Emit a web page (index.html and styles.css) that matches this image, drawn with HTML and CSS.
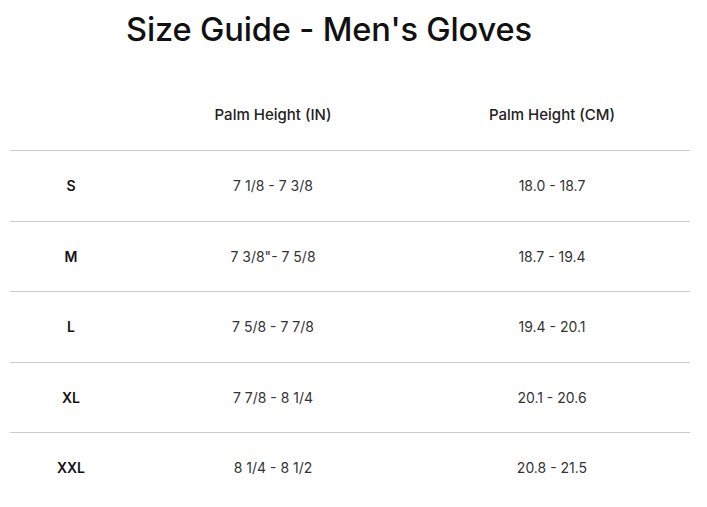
FILE: index.html
```html
<!DOCTYPE html>
<html>
<head>
<meta charset="utf-8">
<link rel="stylesheet" href="styles.css">
</head>
<body>
<div class="page">
  <h1 class="title">Size Guide - Men's Gloves</h1>
  <table class="sizes">
    <thead>
      <tr><th class="c1"></th><th class="c2">Palm Height (IN)</th><th class="c3">Palm Height (CM)</th></tr>
    </thead>
    <tbody>
      <tr><td class="size">S</td><td>7 1/8 - 7 3/8</td><td>18.0 - 18.7</td></tr>
      <tr><td class="size">M</td><td>7 3/8"- 7 5/8</td><td>18.7 - 19.4</td></tr>
      <tr><td class="size">L</td><td>7 5/8 - 7 7/8</td><td>19.4 - 20.1</td></tr>
      <tr><td class="size">XL</td><td>7 7/8 - 8 1/4</td><td>20.1 - 20.6</td></tr>
      <tr><td class="size">XXL</td><td>8 1/4 - 8 1/2</td><td>20.8 - 21.5</td></tr>
    </tbody>
  </table>
</div>
</body>
</html>
```
FILE: styles.css
```css
html, body { margin: 0; padding: 0; background: #fff; }
body { font-family: Inter, "Liberation Sans", sans-serif; color: #222; }
.page { padding: 0 17px 0 10px; }
.title {
  margin: 0;
  padding: 10px 0 0 116px;
  font-size: 32.6px;
  font-weight: 500;
  color: #111;
  line-height: 38px;
  letter-spacing: -0.15px;
}
.sizes {
  width: 680px;
  border-collapse: collapse;
  margin-top: 32px;
  table-layout: fixed;
}
.c1 { width: 122px; }
.c2 { width: 282px; }
.sizes th {
  font-weight: 500;
  font-size: 15px;
  height: 68px;
  padding: 0 0 2px;
  text-align: center;
  color: #222;
  border-bottom: 1px solid #ccc;
}
.sizes td {
  height: 69.5px;
  padding: 0;
  text-align: center;
  font-size: 14px;
  color: #333;
  border-bottom: 1px solid #ccc;
}
.sizes tbody tr:last-child td { border-bottom: none; }
.sizes td.size { font-weight: 600; color: #111; }
```
